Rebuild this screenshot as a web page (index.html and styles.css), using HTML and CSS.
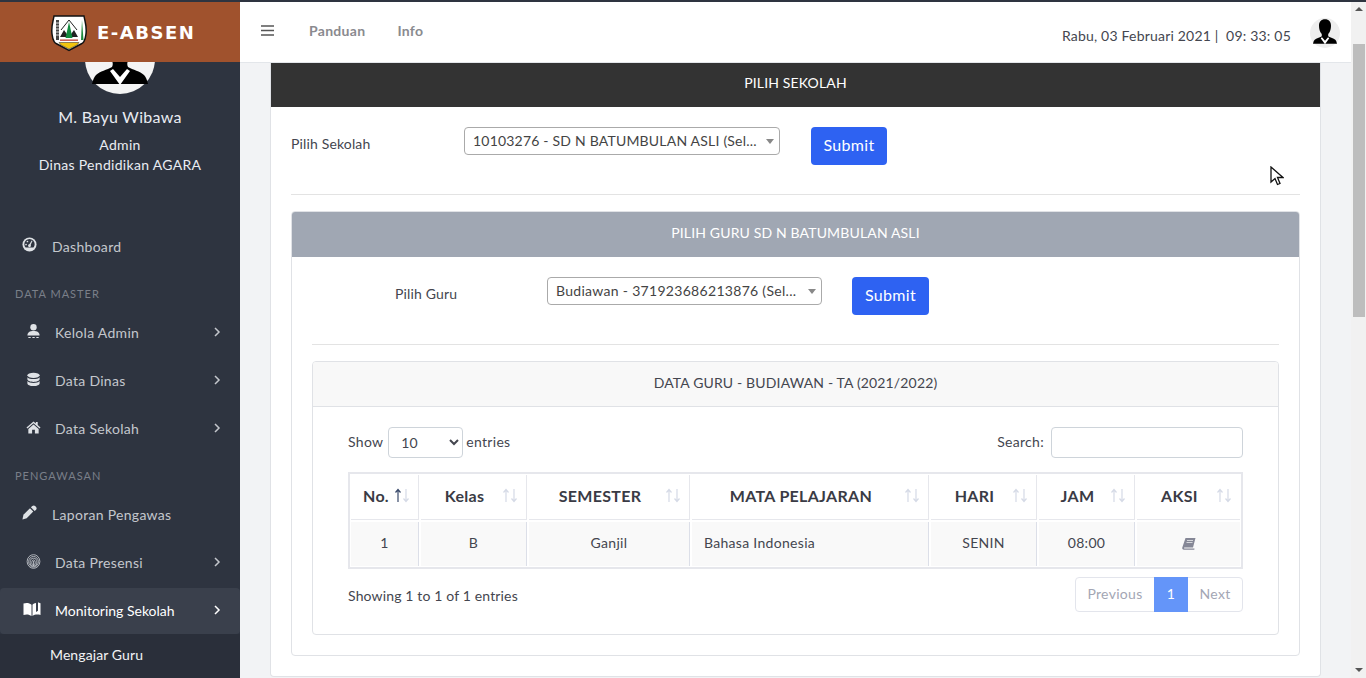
FILE: index.html
```html
<!DOCTYPE html>
<html lang="id">
<head>
<meta charset="utf-8">
<title>E-ABSEN</title>
<link rel="stylesheet" href="styles.css">
</head>
<body>
<svg class="defs" width="0" height="0" aria-hidden="true">
  <symbol id="silhouette" viewBox="0 0 70 70">
    <path d="M35 3c-9 0-14 6-14 15 0 7 2 14 6 19 1 2 1 4 0 6-5 3-12 4-16 8-2 2-3 5-4 9h56c-1-4-2-7-4-9-4-4-11-5-16-8-1-2-1-4 0-6 4-5 6-12 6-19 0-9-5-15-14-15z" fill="#000"/>
    <path d="M28 45l7 8 7-8 3 2-10 14-10-14z" fill="#fff"/>
  </symbol>
  <symbol id="sort" viewBox="0 0 16 15">
    <path d="M4 14V2M1.500 4.500L4 1.500l2.500 3" fill="none" stroke="currentColor" stroke-width="1.200"/>
    <path class="down" d="M12 1v12M9.500 10.500L12 13.500l2.500-3" fill="none" stroke="#d5dae6" stroke-width="1.200"/>
  </symbol>
  <symbol id="chev" viewBox="0 0 8 12">
    <path d="M2 2l4 4-4 4" fill="none" stroke="currentColor" stroke-width="1.500"/>
  </symbol>
</svg>

<div class="app">
  <aside class="sidebar">
    <div class="brand">
      <svg class="logo" viewBox="0 0 36 38">
        <path d="M3 2h30c1 6 3 10 2 18-1 8-3 9-5 10l-12 6.500L6 30c-2-1-4-2-5-10C0 12 2 8 3 2z" fill="#fff" stroke="#111" stroke-width="1.500"/>
        <path d="M5 6h3v20H5z" fill="#444"/>
        <path d="M5 9h3M5 12h3M5 15h3M5 18h3M5 21h3" stroke="#fff" stroke-width=".8"/>
        <path d="M31 6l1.500 20h-2.500z" fill="#1c8a3c"/>
        <path d="M18 6l8 10M18 6l-8 10" stroke="#222" fill="none"/>
        <path d="M9 23l4-7 5 7zM18 23l5-7 4 7z" fill="#222"/>
        <path d="M18 8l3.500 16h-7z" fill="#128a3e"/>
        <path d="M9 25.500h18v1.300H9z" fill="#c0392b"/>
        <path d="M8 28.500h20l-2 2.500-8 4-8-4z" fill="#f1c40f" stroke="#222" stroke-width=".5"/>
      </svg>
      <span class="brand-name">E-ABSEN</span>
    </div>
    <div class="side-scroll">
      <div class="profile">
        <svg class="profile-pic" viewBox="0 0 70 70"><circle cx="35" cy="35" r="35" fill="#f4f4f4"/><use href="#silhouette"/></svg>
        <p class="profile-name">M. Bayu Wibawa</p>
        <p class="profile-role">Admin<br>Dinas Pendidikan AGARA</p>
      </div>
      <nav class="nav">
        <a class="nav-item nav-plain">
          <svg class="ico" viewBox="0 0 16 16"><circle cx="8" cy="8" r="7.500" fill="#dfe2e6"/><path d="M8 2a5.500 5.500 0 0 0-5.500 5.500c0 1.500.5 2.800 1.300 3.800h8.400c.8-1 1.300-2.300 1.300-3.800A5.500 5.500 0 0 0 8 2z" fill="#2e3440"/><path d="M7.300 8.800l3-5 .9.500-2.600 5.200z" fill="#dfe2e6"/><circle cx="8" cy="9.300" r="1.500" fill="#dfe2e6"/><circle cx="4.300" cy="8" r=".9" fill="#dfe2e6"/><circle cx="5.800" cy="4.800" r=".9" fill="#dfe2e6"/></svg>
          <span>Dashboard</span>
        </a>
        <div class="nav-head">Data Master</div>
        <a class="nav-item">
          <svg class="ico" viewBox="0 0 16 16"><circle cx="8" cy="3.500" r="3.400" fill="#dfe2e6"/><path d="M1.500 12.300c0-3.300 2.500-4.800 6.500-4.800s6.500 1.500 6.500 4.800z" fill="#dfe2e6"/><path d="M2.500 13.800h2.500v1.200H2.500zM6.800 13.800h2.500v1.200H6.800zM11 13.800h2.500v1.200H11z" fill="#dfe2e6"/></svg>
          <span>Kelola Admin</span>
          <svg class="chev"><use href="#chev"/></svg>
        </a>
        <a class="nav-item">
          <svg class="ico" viewBox="0 0 16 16"><ellipse cx="8" cy="3.500" rx="6.500" ry="2.800" fill="#dfe2e6"/><path d="M1.500 5.500v2.300c0 1.500 3 2.800 6.500 2.800s6.500-1.300 6.500-2.800V5.500C13 7 11 7.500 8 7.500S3 7 1.500 5.500z" fill="#dfe2e6"/><path d="M1.500 9.700v2.500c0 1.500 3 2.800 6.500 2.800s6.500-1.300 6.500-2.800V9.700c-1.500 1.500-3.500 2-6.500 2s-5-.5-6.500-2z" fill="#dfe2e6"/></svg>
          <span>Data Dinas</span>
          <svg class="chev"><use href="#chev"/></svg>
        </a>
        <a class="nav-item">
          <svg class="ico" viewBox="0 0 16 16"><path d="M8 1.500L.5 8l1 1L8 3.500 14.500 9l1-1-3-2.600V2h-2v1.700z" fill="#dfe2e6"/><path d="M2.500 9.500L8 4.800l5.500 4.700V14.500h-4v-4h-3v4h-4z" fill="#dfe2e6"/></svg>
          <span>Data Sekolah</span>
          <svg class="chev"><use href="#chev"/></svg>
        </a>
        <div class="nav-head">Pengawasan</div>
        <a class="nav-item nav-plain">
          <svg class="ico" viewBox="0 0 16 16"><path d="M.5 15.500l1-5 7-7 3.500 3.500-7 7z" fill="#dfe2e6"/><path d="M9.500 2.500l1.500-1.500c1-.8 2-.8 3 0l1 1c.8 1 .8 2 0 3L13.500 6.500z" fill="#dfe2e6"/></svg>
          <span>Laporan Pengawas</span>
        </a>
        <a class="nav-item">
          <svg class="ico" viewBox="0 0 16 16" fill="none" stroke="#c4c7cd" stroke-width=".9"><ellipse cx="8" cy="8" rx="6.800" ry="7.300"/><ellipse cx="8" cy="8.300" rx="5.200" ry="5.700"/><ellipse cx="8" cy="8.800" rx="3.600" ry="4.300"/><ellipse cx="8" cy="9.300" rx="1.900" ry="3"/><path d="M8 7.500v5.500"/></svg>
          <span>Data Presensi</span>
          <svg class="chev"><use href="#chev"/></svg>
        </a>
        <a class="nav-item active">
          <svg class="ico ico-wide" viewBox="0 0 18 16"><path d="M.5 2.500c3-1 6-.5 8 1.200V15c-2-1.500-5-2-8-1z" fill="#fff"/><path d="M9.500 3.700c1-.8 2-1.300 3.500-1.600V11l2-1.200V1.200l1 .5 1.500.6V14c-3-.8-6-.5-8 1z" fill="#fff"/></svg>
          <span>Monitoring Sekolah</span>
          <svg class="chev"><use href="#chev"/></svg>
        </a>
        <a class="nav-sub">Mengajar Guru</a>
      </nav>
    </div>
  </aside>

  <div class="main">
    <header class="topbar">
      <svg class="burger" viewBox="0 0 13 11"><path d="M0 1h13M0 5.500h13M0 10h13" stroke="#555" stroke-width="1.600"/></svg>
      <a class="top-link">Panduan</a>
      <a class="top-link">Info</a>
      <span class="clock">Rabu, 03 Februari 2021 |&nbsp; 09: 33: 05</span>
      <svg class="top-avatar" viewBox="0 0 70 70"><circle cx="35" cy="35" r="35" fill="#eee"/><use href="#silhouette"/></svg>
    </header>
    <main class="content">
      <section class="card">
        <h2 class="head head-dark">PILIH SEKOLAH</h2>
        <div class="body">
          <div class="form-row">
            <label class="lab lab-school">Pilih Sekolah</label>
            <div class="s2 s2-school"><span>10103276 - SD N BATUMBULAN ASLI (Sel...</span><i class="caret"></i></div>
            <button class="btn btn-school">Submit</button>
          </div>
          <hr class="rule">
          <section class="card card-guru">
            <h2 class="head head-gray">PILIH GURU SD N BATUMBULAN ASLI</h2>
            <div class="body">
              <div class="form-row">
                <label class="lab lab-guru">Pilih Guru</label>
                <div class="s2 s2-guru"><span>Budiawan - 371923686213876 (Sel...</span><i class="caret"></i></div>
                <button class="btn btn-guru">Submit</button>
              </div>
              <hr class="rule">
              <section class="card card-data">
                <h2 class="head head-light">DATA GURU - BUDIAWAN - TA (2021/2022)</h2>
                <div class="body body-data">
                  <div class="dt-top">
                    <label class="dt-len">Show
                      <select class="dt-select"><option>10</option></select>
                      entries</label>
                    <label class="dt-search">Search: <input class="dt-input" type="text"></label>
                  </div>
                  <table class="table">
                    <colgroup><col class="c1"><col class="c2"><col class="c3"><col class="c4"><col class="c5"><col class="c6"><col class="c7"></colgroup>
                    <thead>
                      <tr>
                        <th>No.<svg class="sort sort-on"><use href="#sort"/></svg></th>
                        <th>Kelas<svg class="sort"><use href="#sort"/></svg></th>
                        <th>SEMESTER<svg class="sort"><use href="#sort"/></svg></th>
                        <th>MATA PELAJARAN<svg class="sort"><use href="#sort"/></svg></th>
                        <th>HARI<svg class="sort"><use href="#sort"/></svg></th>
                        <th>JAM<svg class="sort"><use href="#sort"/></svg></th>
                        <th>AKSI<svg class="sort"><use href="#sort"/></svg></th>
                      </tr>
                    </thead>
                    <tbody>
                      <tr>
                        <td>1</td><td>B</td><td>Ganjil</td><td class="left">Bahasa Indonesia</td><td>SENIN</td><td>08:00</td>
                        <td><svg class="book" viewBox="0 0 14 12"><path d="M3.500 0H13.500L11 9.500H2.500c-.7 0-.8 1 0 1H12.500l-.2 1.200H2C.5 11.700 0 10.500.3 9.500z" fill="#858796"/><path d="M5 2.500h6M4.500 4.500h6" stroke="#f9f9f9" stroke-width=".7"/></svg></td>
                      </tr>
                    </tbody>
                  </table>
                  <div class="dt-bottom">
                    <span class="dt-info">Showing 1 to 1 of 1 entries</span>
                    <div class="pager"><a class="pg pg-prev">Previous</a><a class="pg pg-cur">1</a><a class="pg pg-next">Next</a></div>
                  </div>
                </div>
              </section>
            </div>
          </section>
        </div>
      </section>
    </main>
  </div>

  <div class="scrollbar">
    <i class="sb-up"></i>
    <i class="sb-thumb"></i>
    <i class="sb-down"></i>
  </div>
</div>

<svg class="cursor" viewBox="0 0 14 20"><path d="M1 1v15l4-3.500 2.500 6 2.500-1-2.500-6H13z" fill="#fff" stroke="#111" stroke-width="1.300"/></svg>
</body>
</html>
```

FILE: styles.css
```css
* { box-sizing: border-box; }
html, body { margin: 0; height: 100%; overflow: hidden; }
body {
  font-family: "Lato", "Noto Sans", sans-serif;
  font-size: 14px;
  letter-spacing: .3px;
  color: #44464f;
  background: #f2f3f5;
}
.defs { position: absolute; }
.app { display: flex; height: 678px; border-top: 2px solid #2e3440; }

/* sidebar */
.sidebar { width: 240px; flex: none; display: flex; flex-direction: column; background: #2e3440; overflow: hidden; }
.brand { height: 60px; flex: none; background: #a0522d; display: flex; align-items: center; padding-left: 51px; position: relative; z-index: 1; }
.logo { width: 36px; height: 38px; margin-top: 1px; }
.brand-name { font-family: "DejaVu Sans", sans-serif; font-weight: 700; font-size: 18px; letter-spacing: 1.500px; color: #fff; margin-left: 10px; }
.side-scroll { flex: 1; overflow: hidden; }
.profile { margin-top: -38px; text-align: center; color: #e9ecf2; }
.profile-pic { display: block; width: 70px; height: 70px; margin: 0 auto; }
.profile-name { margin: 12px 0 0; font-size: 16px; line-height: 22px; }
.profile-role { margin: 7px 0 0; line-height: 20px; }
.nav { margin-top: 49px; color: #c4c7cd; }
.nav-item { display: flex; align-items: center; height: 46px; margin-bottom: 2px; padding-left: 26px; border-radius: 4px; }
.nav-item span { padding-bottom: 2px; }
.nav-plain { padding-left: 22px; }
.ico { width: 15px; height: 15px; flex: none; margin-right: 14px; margin-top: -4px; }
.nav-plain .ico { margin-right: 15px; margin-top: -6px; }
.ico-wide { width: 18px; height: 16px; margin-left: -3px; margin-right: 14px; }
.chev { width: 8px; height: 12px; margin-left: auto; margin-right: 19px; margin-top: -3px; color: #c4c7cd; }
.nav-head { font-size: 11px; letter-spacing: 1px; text-transform: uppercase; color: #7a7f89; padding-left: 15px; height: 24px; line-height: 15px; }
.nav-item + .nav-head { margin-top: 16px; }
.active { background: #3a404c; color: #fff; }
.active span { letter-spacing: 0; }
.active .chev { color: #fff; }
.nav-sub { display: block; color: #f2f3f5; padding: 12px 0 0 50px; margin-top: -2px; background: #2a2f3a; height: 60px; letter-spacing: .1px; }

/* main */
.main { flex: 1; min-width: 0; display: flex; flex-direction: column; }
.topbar { height: 61px; flex: none; background: #fff; border-bottom: 1px solid #e3e6ea; display: flex; align-items: flex-start; padding-left: 21px; }
.burger { width: 13px; height: 11px; margin-top: 23px; margin-right: 35px; }
.top-link { font-weight: 700; color: #8a8a8f; margin-top: 20px; margin-right: 32px; line-height: 17px; }
.clock { margin-left: auto; margin-top: 25px; line-height: 17px; color: #44464f; letter-spacing: .2px; }
.top-avatar { width: 30px; height: 30px; margin: 16px 11px 0 19px; }
.content { flex: 1; padding: 0 30px 0 30px; overflow: hidden; }

/* cards */
.card { background: #fff; border: 1px solid #e0e2e6; border-radius: 4px; }
.content > .card { border-top: 0; border-radius: 0 0 4px 4px; height: 614px; }
.head { margin: 0; font-size: 14px; font-weight: 400; letter-spacing: .15px; text-align: center; display: flex; align-items: center; justify-content: center; }
.head-dark { height: 44px; background: #333; color: #fff; padding-bottom: 6px; }
.head-gray { height: 45px; background: #a0a7b3; color: #fff; border-radius: 3px 3px 0 0; padding-bottom: 4px; }
.head-light { height: 45px; background: #f8f8f8; border-bottom: 1px solid #e0e2e6; border-radius: 3px 3px 0 0; color: #44464f; padding-bottom: 3px; }
.body { padding: 20px; }
.form-row { display: flex; align-items: flex-start; }
.lab { line-height: 17px; padding-top: 8px; letter-spacing: .15px; }
.lab-school { width: 173px; }
.lab-guru { width: 235px; padding-left: 83px; }
.s2 { height: 28px; border: 1px solid #aaa; border-radius: 4px; background: #fff; padding-left: 8px; line-height: 25px; color: #444; position: relative; white-space: nowrap; overflow: hidden; }
.s2-school { width: 316px; letter-spacing: .2px; }
.s2-guru { width: 275px; }
.caret { position: absolute; right: 5px; top: 11px; border: 4px solid transparent; border-top: 5px solid #888; border-bottom: 0; }
.btn { height: 38px; border: 0; border-radius: 4px; background: #2e62f2; color: #fff; font: inherit; font-size: 16px; letter-spacing: .3px; padding: 0 0 4px; }
.btn-school { width: 76px; margin-left: 31px; }
.btn-guru { width: 77px; margin-left: 30px; }
.rule { border: 0; border-top: 1px solid #e3e3e3; margin: 29px 0 16px; }
.card-guru { height: 445px; }
.card-data { height: 274px; }
.body-data { padding: 20px 35px 0; }

/* datatable */
.dt-top { display: flex; justify-content: space-between; align-items: center; height: 31px; margin-bottom: 14px; }
.dt-len, .dt-search { display: flex; align-items: center; padding-bottom: 2px; }
.dt-select { width: 75px; height: 31px; margin: 2px 3px 0 5px; font: inherit; color: #44464f; border: 1px solid #ced4da; border-radius: 4px; background: #fff; padding-left: 8px; }
.dt-input { width: 192px; height: 31px; margin: 2px 0 0 7px; border: 1px solid #ced4da; border-radius: 4px; }
.table { width: 895px; table-layout: fixed; border-collapse: separate; border-spacing: 2px; border: 1px solid #e6e7ec; box-shadow: inset 0 0 0 1px #e6e7ec; }
.c1 { width: 68px; } .c2 { width: 106px; } .c3 { width: 161px; } .c4 { width: 237px; }
.c5 { width: 106px; } .c6 { width: 96px; } .c7 { width: 103px; }
.table th { position: relative; height: 45px; padding: 0 30px 4px 12px; font-size: 16px; font-weight: 700; color: #3a3b45; text-align: center; border-right: 1px solid #e6e7ec; border-bottom: 1px solid #e6e7ec; white-space: nowrap; }
.table td { height: 44px; padding: 0 13px 3px; background: #f9f9f9; text-align: center; border-right: 1px solid #dcdfe8; color: #44464f; }
.table th:last-child, .table td:last-child { border-right: 0; }
.table td.left { padding-left: 12px; text-align: left; }
.table td:last-child { padding-bottom: 0; }
.sort { position: absolute; right: 8px; top: 13px; width: 16px; height: 15px; color: #d5dae6; }
.sort-on { color: #3a4a6b; }
.book { display: block; width: 14px; height: 12px; margin: 0 auto; }
.dt-bottom { display: flex; justify-content: space-between; align-items: flex-start; margin-top: 8px; }
.dt-info { line-height: 38px; letter-spacing: .15px; }
.pager { display: flex; height: 35px; border: 1px solid #e3e5ec; border-radius: 4px; color: #a3a6b4; }
.pg { display: flex; align-items: center; justify-content: center; padding-bottom: 2px; }
.pg-prev { width: 78px; }
.pg-cur { width: 34px; background: #6495f9; color: #fff; margin: -1px 0; }
.pg-next { width: 54px; }

/* fake scrollbar and pointer */
.scrollbar { width: 15px; flex: none; background: #f1f1f1; position: relative; }
.sb-thumb { position: absolute; left: 2px; top: 42px; width: 12px; height: 273px; background: #bdbdbd; }
.sb-up, .sb-down { position: absolute; left: 4px; border: 4px solid transparent; }
.sb-up { top: 5px; border-top: 0; border-bottom: 4px solid #555; }
.sb-down { bottom: 6px; border-bottom: 0; border-top: 4px solid #555; }
.cursor { position: absolute; left: 1270px; top: 166px; width: 14px; height: 20px; }
```
